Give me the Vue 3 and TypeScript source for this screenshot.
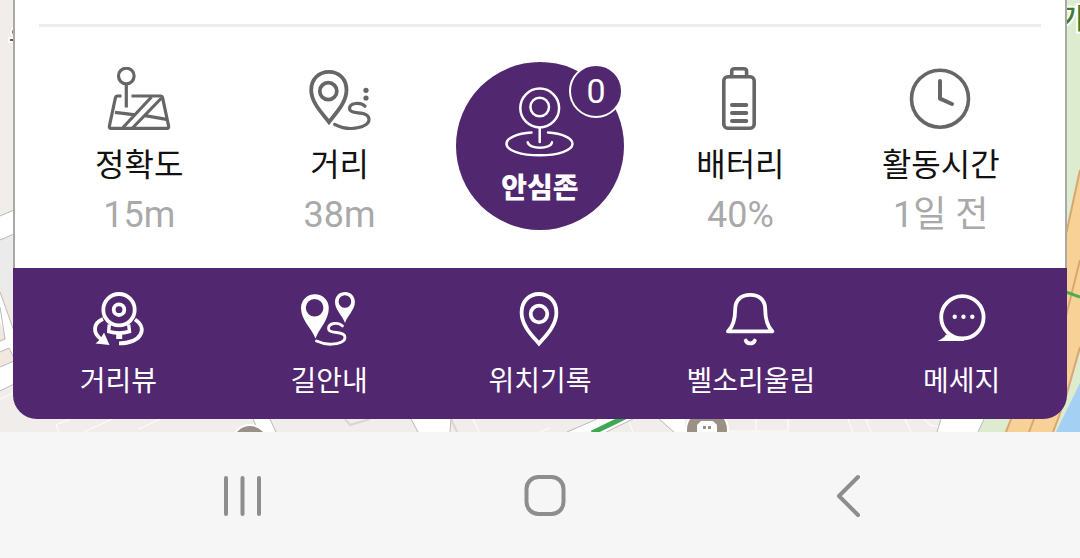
<script setup lang="ts">
interface Stat {
  id: string
  label: string
  value: string
}

interface Action {
  id: string
  label: string
}

const leadingStats: Stat[] = [
  { id: 'accuracy', label: '정확도', value: '15m' },
  { id: 'distance', label: '거리', value: '38m' },
]

const trailingStats: Stat[] = [
  { id: 'battery', label: '배터리', value: '40%' },
  { id: 'activity', label: '활동시간', value: '1일 전' },
]

const actions: Action[] = [
  { id: 'street', label: '거리뷰' },
  { id: 'route', label: '길안내' },
  { id: 'history', label: '위치기록' },
  { id: 'bell', label: '벨소리울림' },
  { id: 'message', label: '메세지' },
]

const safeZoneCount = 0
</script>

<template>
  <div class="screen">
    <main class="stage">
      <svg class="map" viewBox="0 0 1080 432" preserveAspectRatio="xMidYMax slice" aria-hidden="true">
        <rect width="1080" height="432" fill="#f0edea" />
        <path d="M0 238L14 232V330H0Z" fill="#ebebec" />
        <path d="M0 216L14 210V234L0 240Z" fill="#fff" />
        <path d="M0 216L14 210M0 240L14 234" stroke="#b9b9b9" fill="none" />
        <path d="M0 283L14 322V360L0 366Z" fill="#f3e8df" />
        <path d="M0 292L14 331V358L9 348L0 352V342L6 339L0 322Z" fill="#fff" />
        <path d="M0 292L14 331M0 307L5 339L0 341M0 352L9 348L14 358" stroke="#b9b9b9" fill="none" />
        <path d="M0 367L14 361V384L0 391Z" fill="#fff" />
        <path d="M0 367L14 361M0 391L14 384" stroke="#b9b9b9" fill="none" />
        <path d="M0 399L18 391M70 419L56 425L59 432M112 419L84 432M160 419L139 429M473 419L479 432M540 432L550 428M628 419L633 432M727 431H788V419M756 419V431M848 419L853 432M866 419L871 432M905 419L911 432M924 419L930 425L940 427" stroke="#fff" stroke-width="1" fill="none" />
        <path d="M345 419L350 425L370 419M451 419L457 432" stroke="#ddd5d0" stroke-width="2" fill="none" />
        <path d="M253 419H270L276 432H260Z" fill="#fff" />
        <path d="M270 419L276 432M253 419L259 432" stroke="#b9b9b9" fill="none" />
        <path d="M411 419H451V432H418Z" fill="#fff" />
        <path d="M411 419L418 432M451 419L450 432" stroke="#b9b9b9" fill="none" />
        <path d="M597 419H633L606 432H567Z" fill="#fff" />
        <path d="M597 419L567 432M633 419L606 432" stroke="#b9b9b9" fill="none" />
        <path d="M625 417L592 433" stroke="#40a753" stroke-width="5" />
        <path d="M659 419H685V432H674Z" fill="#fff" />
        <path d="M659 419L674 432" stroke="#b9b9b9" />
        <circle cx="250" cy="443" r="18" fill="#9b9085" stroke="#fff" stroke-width="2" />
        <circle cx="707" cy="430" r="21" fill="#9b9085" stroke="#fff" stroke-width="2" />
        <path d="M697 432V425L701 421H713L717 425V432Z" fill="#fff" />
        <path d="M703 426H706V429H703ZM708 426H711V429H708Z" fill="#9b9085" />
        <path d="M1060 0H1080V432H978L984 419L1060 230Z" fill="#ddebcf" />
        <path d="M941 419H984L978 432H937Z" fill="#fff" />
        <path d="M941 419L937 432M984 419L978 432" stroke="#b9b9b9" fill="none" />
        <path d="M1080 170L1067 230L1011 419L1004 432H1053L1067 393L1080 347Z" fill="#f8d196" />
        <path d="M1080 170L1067 230L1011 419L1006 432M1080 260L1067 312L1034 419L1029 432M1080 347L1067 393L1058 419L1053 432" stroke="#d9a671" stroke-width="2" fill="none" />
        <path d="M1080 383L1056 432H1080Z" fill="#a4d1f3" />
        <path d="M1066 292L1080 297" stroke="#4bad4e" stroke-width="3" />
        <text class="place place-street" x="9" y="46">유</text>
        <text class="place place-park" x="1060" y="29">가</text>
      </svg>

      <div class="panel">
        <section class="summary">
          <hr class="divider" />
          <div class="stats">
            <div v-for="stat in leadingStats" :key="stat.id" class="stat">
              <svg class="stat-icon" viewBox="0 0 64 64" aria-hidden="true">
                <g v-if="stat.id === 'accuracy'">
                  <circle cx="19.3" cy="9" r="7.8" />
                  <path d="M19.3 17V40.5M14.5 29H10.6Q8.8 29 8.4 30.8L2.4 59Q2 61.3 4 61.3H60Q62 61.3 61.6 59L55.6 30.8Q55.2 29 53.4 29H24.5" />
                  <path d="M44.5 30L16 60.5M54.5 31L25.5 61M8 45.3L28.5 47.8M38 48.6L59.5 52.3" />
                </g>
                <g v-else>
                  <path d="M21 55C15 47 3.2 36 3.2 23C3.2 12 11 4.8 21 4.8S38.5 12 38.5 23C38.5 36 27 47 21 55Z" stroke-width="3.8" />
                  <circle cx="20.3" cy="24.2" r="8.5" stroke-width="3.8" />
                  <path d="M26.7 57.5C33 60.5 38 61.7 43.5 61.5C54 61 61 57.5 61 52.5C61 47.5 55 46.1 50 45.8C45 45.5 41.5 44.5 41.5 41.5C41.5 36 52 34.5 57 39.2" stroke-linecap="round" />
                  <circle class="solid" cx="58" cy="23.3" r="2.6" />
                  <circle class="solid" cx="58" cy="31" r="2.6" />
                </g>
              </svg>
              <span class="stat-label">{{ stat.label }}</span>
              <span class="stat-value">{{ stat.value }}</span>
            </div>

            <button type="button" class="safe-zone">
              <svg class="safe-icon" viewBox="0 0 70 70" aria-hidden="true">
                <circle cx="34.7" cy="21" r="19.4" />
                <circle cx="34.7" cy="20" r="9.3" />
                <path d="M34.7 41V55" />
                <path d="M26.5 45.6C12 46.5 1.5 51 1.5 56.8C1.5 63.5 16 68.3 34.5 68.3S67.5 63.5 67.5 56.8C67.5 51 57 46.5 43 45.6" />
                <path d="M22.7 55.3C24 62.5 46 62.5 47 55.3" />
              </svg>
              <span class="safe-label">안심존</span>
              <span class="badge">{{ safeZoneCount }}</span>
            </button>

            <div v-for="stat in trailingStats" :key="stat.id" class="stat">
              <svg class="stat-icon" viewBox="0 0 64 64" aria-hidden="true">
                <g v-if="stat.id === 'battery'" stroke-width="3.6">
                  <rect x="15.8" y="9.8" width="30.4" height="51.4" rx="4" />
                  <path d="M23.7 9V4.5Q23.7 1.8 26.4 1.8H36Q38.6 1.8 38.6 4.5V9" />
                  <path d="M24 38H38.3M24 46H38.3M24 54H38.3" stroke-width="4" stroke-linecap="round" />
                </g>
                <g v-else stroke-width="3.6">
                  <circle cx="31" cy="31.7" r="28.5" />
                  <path d="M31 14V31.7L43 37" stroke-width="4" stroke-linecap="round" stroke-linejoin="round" />
                </g>
              </svg>
              <span class="stat-label">{{ stat.label }}</span>
              <span class="stat-value">{{ stat.value }}</span>
            </div>
          </div>
        </section>

        <nav class="actions">
          <button v-for="action in actions" :key="action.id" type="button" class="action">
            <svg class="action-icon" viewBox="0 0 56 56" aria-hidden="true">
              <g v-if="action.id === 'street'">
                <circle cx="29" cy="18.7" r="15.7" />
                <circle cx="29" cy="18.7" r="5.3" />
                <path d="M13 28C3 32 2.5 42 11 48" />
                <path class="solid" d="M14 41.5L19.5 54L5.5 52.5L10 48.5Z" />
                <path d="M45 28.5C58 37 52 52 29 52.4" />
                <path d="M19.3 33.5L18.7 40.5Q29 43.5 39.5 40.5L38.7 33.5" stroke-width="3.4" />
                <path d="M29.2 41V48" stroke-width="6" />
              </g>
              <g v-else-if="action.id === 'route'">
                <path class="solid" fill-rule="evenodd" d="M14.5 47.5C11 38 0 29 0 17.3C0 9 6 3.3 13.9 3.3S27.8 9 27.8 17.3C27.8 29 18 38 14.5 47.5ZM13.6 8A8.8 8.8 0 1 0 13.6 25.6A8.8 8.8 0 1 0 13.6 8Z" />
                <path class="solid" fill-rule="evenodd" d="M44 32C42 25 34 19 34 11C34 5 38.3 1 44 1S53.9 5 53.9 11C53.9 19 46 25 44 32ZM43.9 4.2A6.3 6.3 0 1 0 43.9 16.8A6.3 6.3 0 1 0 43.9 4.2Z" />
                <path d="M15.5 50C21 52.5 26 53.4 30.5 53.2C38 53 44 50.5 44 46.5C44 43 39.5 41.8 35.5 41.5C31 41.2 27.5 40.5 27.5 37.5C27.5 32 37 30.5 41.5 35" stroke-width="2.8" stroke-linecap="round" />
              </g>
              <g v-else-if="action.id === 'history'">
                <path d="M27 52.6C21 45.5 9.6 35 9.6 21.5C9.6 10.5 17 3 27 3S44.4 10.5 44.4 21.5C44.4 35 33 45.5 27 52.6Z" />
                <circle cx="27" cy="23" r="8.3" />
              </g>
              <g v-else-if="action.id === 'bell'" stroke-linecap="round" stroke-linejoin="round">
                <path d="M5 40.4C10.5 35 12.2 28 12.2 18C12.2 9 18.5 3.8 27.2 3.8S42.2 9 42.2 18C42.2 28 44 35 49.3 40.4Z" />
                <path d="M22.7 49.6C24.5 53.4 30 53.4 31.8 49.6" />
              </g>
              <g v-else>
                <circle cx="28.4" cy="26.3" r="21.2" />
                <path class="solid" d="M3.7 49.9C8 48 10.5 46.5 12 43.5L20 46.5H30V49.9Z" />
                <circle class="solid" cx="20.7" cy="25.7" r="2.2" />
                <circle class="solid" cx="29.5" cy="25.7" r="2.2" />
                <circle class="solid" cx="38.3" cy="25.7" r="2.2" />
              </g>
            </svg>
            <span>{{ action.label }}</span>
          </button>
        </nav>
      </div>
    </main>

    <footer class="system-bar">
      <button type="button" aria-label="최근 앱">
        <svg viewBox="0 0 44 44" aria-hidden="true">
          <path d="M5 4V40M21.5 4V40M38 4V40" />
        </svg>
      </button>
      <button type="button" aria-label="홈">
        <svg viewBox="0 0 44 44" aria-hidden="true">
          <rect x="2.5" y="3" width="37" height="37" rx="12" />
        </svg>
      </button>
      <button type="button" aria-label="뒤로">
        <svg viewBox="0 0 44 44" aria-hidden="true">
          <path d="M31 3L12 22L31 41" />
        </svg>
      </button>
    </footer>
  </div>
</template>

<style>
body {
  margin: 0;
  background: #f6f6f6;
}
</style>

<style scoped>
.screen {
  display: flex;
  flex-direction: column;
  min-height: 100vh;
  background: #f6f6f6;
  font-family: Roboto, 'Noto Sans CJK KR', sans-serif;
}

button {
  margin: 0;
  padding: 0;
  border: 0;
  background: none;
  color: inherit;
  font: inherit;
  cursor: pointer;
}

svg {
  display: block;
  fill: none;
}

.solid {
  fill: currentColor;
  stroke: none;
}

.stage {
  position: relative;
  padding: 0 13px 13px;
}

.map {
  position: absolute;
  inset: 0;
  width: 100%;
  height: 100%;
}

.place {
  font-family: 'Noto Sans CJK KR', sans-serif;
  font-weight: 500;
  stroke: #fff;
  stroke-width: 4px;
  paint-order: stroke;
}

.place-street {
  fill: #555;
  font-size: 24px;
}

.place-park {
  fill: #3f7d33;
  font-size: 28px;
}

.panel {
  position: relative;
  overflow: hidden;
  border-radius: 0 0 24px 24px;
}

.summary {
  padding: 24px 24px 31px;
  border: solid #a9a9a7;
  border-width: 0 2px;
  background: #fff;
}

.divider {
  height: 3px;
  margin: 0 0 35px;
  border: 0;
  background: #ededed;
}

.stats {
  display: grid;
  grid-template-columns: repeat(5, 1fr);
  justify-items: center;
  align-items: start;
}

.stat {
  display: flex;
  flex-direction: column;
  align-items: center;
  padding-top: 5px;
}

.stat-icon {
  width: 64px;
  height: 64px;
  color: #666;
  stroke: #666;
  stroke-width: 3.2px;
}

.stat-icon g[stroke-width] {
  stroke-width: 3.6px;
}

.stat-label {
  margin-top: 14px;
  color: #111;
  font-size: 32px;
  line-height: 40px;
}

.stat-value {
  margin-top: 8px;
  color: #a9a9a9;
  font-size: 36px;
  line-height: 44px;
}

.safe-zone {
  position: relative;
  display: flex;
  flex-direction: column;
  align-items: center;
  width: 168px;
  height: 168px;
  padding-top: 25px;
  border-radius: 50%;
  background: #51276f;
  color: #fff;
}

.safe-icon {
  width: 70px;
  height: 70px;
  stroke: #fff;
  stroke-width: 2.5px;
  stroke-linecap: round;
}

.safe-label {
  margin-top: 16px;
  font-size: 28px;
  font-weight: 900;
  line-height: 32px;
}

.badge {
  position: absolute;
  top: 2px;
  right: 1px;
  box-sizing: border-box;
  width: 54px;
  height: 54px;
  border: 2px solid #fff;
  border-radius: 50%;
  background: #51276f;
  font-size: 34px;
  line-height: 50px;
  text-align: center;
}

.actions {
  display: grid;
  grid-template-columns: repeat(5, 1fr);
  padding: 23px 0 19px;
  background: #51276f;
  color: #fff;
}

.action {
  display: flex;
  flex-direction: column;
  align-items: center;
  gap: 17px;
  font-size: 28px;
  line-height: 36px;
}

.action-icon {
  width: 56px;
  height: 56px;
  stroke: #fff;
  stroke-width: 3.8px;
}

.system-bar {
  display: grid;
  flex: 1;
  grid-template-columns: repeat(3, 1fr);
  align-items: center;
  justify-items: center;
  min-height: 126px;
  padding: 2px 80px 0 92px;
  box-sizing: border-box;
  background: #f6f6f6;
}

.system-bar svg {
  width: 44px;
  height: 44px;
  stroke: #8d8d8d;
  stroke-width: 4px;
  stroke-linecap: round;
  stroke-linejoin: round;
}
</style>
